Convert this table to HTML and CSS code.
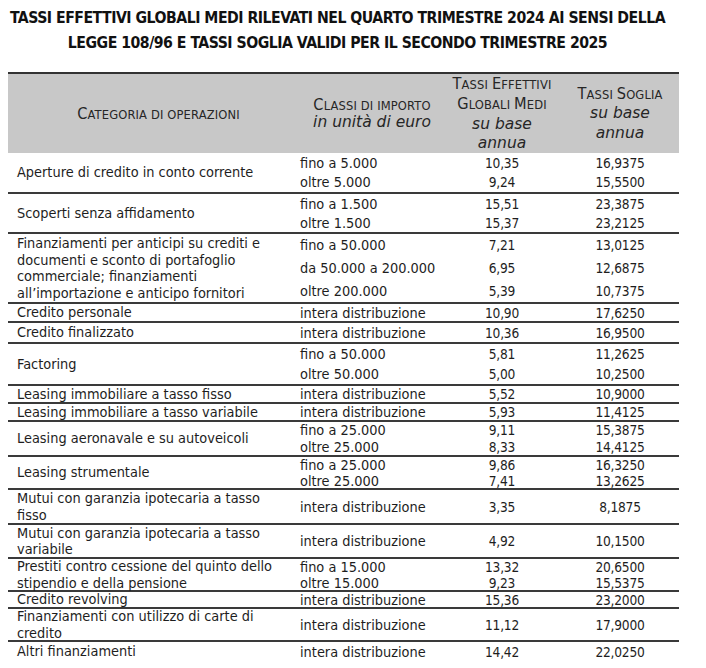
FILE: index.html
```html
<!DOCTYPE html>
<html lang="it">
<head>
<meta charset="utf-8">
<title>Tassi soglia</title>
<link rel="stylesheet" href="styles.css">
</head>
<body>
<div class="page">
  <h1 class="title"><span class="tl">TASSI EFFETTIVI GLOBALI MEDI RILEVATI NEL QUARTO TRIMESTRE 2024 AI SENSI DELLA</span><span class="tl">LEGGE 108/96 E TASSI SOGLIA VALIDI PER IL SECONDO TRIMESTRE 2025</span></h1>
  <div class="table">
    <div class="head">
      <div class="hc hc-cat"><span class="sc"><span class="cap">C</span>ATEGORIA DI OPERAZIONI</span></div>
      <div class="hc hc-cls"><span class="sc"><span class="cap">C</span>LASSI DI IMPORTO</span><span class="it">in unità di euro</span></div>
      <div class="hc hc-teg"><span class="sc"><span class="cap">T</span>ASSI <span class="cap">E</span>FFETTIVI</span><span class="sc"><span class="cap">G</span>LOBALI <span class="cap">M</span>EDI</span><span class="it">su base</span><span class="it">annua</span></div>
      <div class="hc hc-ts"><span class="sc"><span class="cap">T</span>ASSI <span class="cap">S</span>OGLIA</span><span class="it">su base</span><span class="it">annua</span></div>
    </div>

    <div class="group h39">
      <div class="cat">Aperture di credito in conto corrente</div>
      <div class="lines">
        <div class="line"><span class="cls">fino a 5.000</span><span class="num">10,35</span><span class="num">16,9375</span></div>
        <div class="line"><span class="cls">oltre 5.000</span><span class="num">9,24</span><span class="num">15,5500</span></div>
      </div>
    </div>

    <div class="group h40">
      <div class="cat">Scoperti senza affidamento</div>
      <div class="lines">
        <div class="line"><span class="cls">fino a 1.500</span><span class="num">15,51</span><span class="num">23,3875</span></div>
        <div class="line"><span class="cls">oltre 1.500</span><span class="num">15,37</span><span class="num">23,2125</span></div>
      </div>
    </div>

    <div class="group h70">
      <div class="cat">Finanziamenti per anticipi su crediti e documenti e sconto di portafoglio commerciale; finanziamenti all’importazione e anticipo fornitori</div>
      <div class="lines">
        <div class="line"><span class="cls">fino a 50.000</span><span class="num">7,21</span><span class="num">13,0125</span></div>
        <div class="line"><span class="cls">da 50.000 a 200.000</span><span class="num">6,95</span><span class="num">12,6875</span></div>
        <div class="line"><span class="cls">oltre 200.000</span><span class="num">5,39</span><span class="num">10,7375</span></div>
      </div>
    </div>

    <div class="group h19">
      <div class="cat">Credito personale</div>
      <div class="lines">
        <div class="line"><span class="cls">intera distribuzione</span><span class="num">10,90</span><span class="num">17,6250</span></div>
      </div>
    </div>

    <div class="group h21">
      <div class="cat">Credito finalizzato</div>
      <div class="lines">
        <div class="line"><span class="cls">intera distribuzione</span><span class="num">10,36</span><span class="num">16,9500</span></div>
      </div>
    </div>

    <div class="group h42">
      <div class="cat">Factoring</div>
      <div class="lines">
        <div class="line"><span class="cls">fino a 50.000</span><span class="num">5,81</span><span class="num">11,2625</span></div>
        <div class="line"><span class="cls">oltre 50.000</span><span class="num">5,00</span><span class="num">10,2500</span></div>
      </div>
    </div>

    <div class="group h18">
      <div class="cat">Leasing immobiliare a tasso fisso</div>
      <div class="lines">
        <div class="line"><span class="cls">intera distribuzione</span><span class="num">5,52</span><span class="num">10,9000</span></div>
      </div>
    </div>

    <div class="group h18">
      <div class="cat">Leasing immobiliare a tasso variabile</div>
      <div class="lines">
        <div class="line"><span class="cls">intera distribuzione</span><span class="num">5,93</span><span class="num">11,4125</span></div>
      </div>
    </div>

    <div class="group h35">
      <div class="cat">Leasing aeronavale e su autoveicoli</div>
      <div class="lines">
        <div class="line"><span class="cls">fino a 25.000</span><span class="num">9,11</span><span class="num">15,3875</span></div>
        <div class="line"><span class="cls">oltre 25.000</span><span class="num">8,33</span><span class="num">14,4125</span></div>
      </div>
    </div>

    <div class="group h33">
      <div class="cat">Leasing strumentale</div>
      <div class="lines">
        <div class="line"><span class="cls">fino a 25.000</span><span class="num">9,86</span><span class="num">16,3250</span></div>
        <div class="line"><span class="cls">oltre 25.000</span><span class="num">7,41</span><span class="num">13,2625</span></div>
      </div>
    </div>

    <div class="group h35">
      <div class="cat">Mutui con garanzia ipotecaria a tasso fisso</div>
      <div class="lines">
        <div class="line"><span class="cls">intera distribuzione</span><span class="num">3,35</span><span class="num">8,1875</span></div>
      </div>
    </div>

    <div class="group h34">
      <div class="cat">Mutui con garanzia ipotecaria a tasso variabile</div>
      <div class="lines">
        <div class="line"><span class="cls">intera distribuzione</span><span class="num">4,92</span><span class="num">10,1500</span></div>
      </div>
    </div>

    <div class="group h33">
      <div class="cat">Prestiti contro cessione del quinto dello stipendio e della pensione</div>
      <div class="lines">
        <div class="line"><span class="cls">fino a 15.000</span><span class="num">13,32</span><span class="num">20,6500</span></div>
        <div class="line"><span class="cls">oltre 15.000</span><span class="num">9,23</span><span class="num">15,5375</span></div>
      </div>
    </div>

    <div class="group h17">
      <div class="cat">Credito revolving</div>
      <div class="lines">
        <div class="line"><span class="cls">intera distribuzione</span><span class="num">15,36</span><span class="num">23,2000</span></div>
      </div>
    </div>

    <div class="group h33">
      <div class="cat">Finanziamenti con utilizzo di carte di credito</div>
      <div class="lines">
        <div class="line"><span class="cls">intera distribuzione</span><span class="num">11,12</span><span class="num">17,9000</span></div>
      </div>
    </div>

    <div class="group h21">
      <div class="cat">Altri finanziamenti</div>
      <div class="lines">
        <div class="line"><span class="cls">intera distribuzione</span><span class="num">14,42</span><span class="num">22,0250</span></div>
      </div>
    </div>
  </div>
</div>
</body>
</html>
```

FILE: styles.css
```css
* { box-sizing: border-box; }

html, body {
  margin: 0;
  padding: 0;
  background: #ffffff;
}

body {
  font-family: "DejaVu Sans Condensed", "DejaVu Sans", sans-serif;
  color: #1e1e1e;
  font-size: 14.4px;
}

.page {
  width: 706px;
  height: 668px;
  padding: 0 0 0 8px;
  overflow: hidden;
}

.title {
  width: 659px;
  margin: 0;
  padding-top: 5px;
  height: 72px;
  display: flex;
  flex-direction: column;
  align-items: center;
  font-size: 15.7px;
  line-height: 25px;
  font-weight: bold;
  color: #111;
  letter-spacing: -0.5px;
}

.tl { white-space: nowrap; }

.table {
  width: 671px;
  border-top: 2px solid #333;
}

.head {
  display: flex;
  height: 79px;
  background: #c8c8c8;
  color: #262626;
}

.hc {
  display: flex;
  flex-direction: column;
  justify-content: center;
  align-items: center;
  text-align: center;
  white-space: nowrap;
}

.hc-cat { width: 285px; padding-left: 16px; }
.hc-cls { width: 150px; line-height: 17px; padding-left: 8px; }
.hc-teg { width: 118px; line-height: 19.5px; }
.hc-ts { width: 118px; line-height: 19.5px; }

.sc {
  font-size: 12.8px;
  letter-spacing: 0.15px;
}

.cap {
  font-size: 16.2px;
}

.it {
  font-family: "DejaVu Sans", sans-serif;
  font-style: italic;
  font-size: 15.5px;
}

.group {
  display: flex;
  border-top: 2px solid #3a3a3a;
}

.group:nth-child(2) { border-top: none; }

.h17 { height: 17px; }
.h18 { height: 18px; }
.h19 { height: 19px; }
.h21 { height: 21px; }
.h33 { height: 33px; }
.h34 { height: 34px; }
.h35 { height: 35px; }
.h39 { height: 39px; }
.h40 { height: 40px; }
.h42 { height: 42px; }
.h70 { height: 70px; }

.cat {
  width: 285px;
  padding: 0 6px 0 9px;
  display: flex;
  align-items: center;
  line-height: 16.5px;
}

.lines {
  flex: 1;
  display: flex;
  flex-direction: column;
  justify-content: space-around;
}

.line {
  display: grid;
  grid-template-columns: 150px 118px 118px;
  line-height: 16px;
}

.cls { padding-left: 7px; white-space: nowrap; }
.num { text-align: center; font-size: 13.6px; letter-spacing: -0.2px; }
```
